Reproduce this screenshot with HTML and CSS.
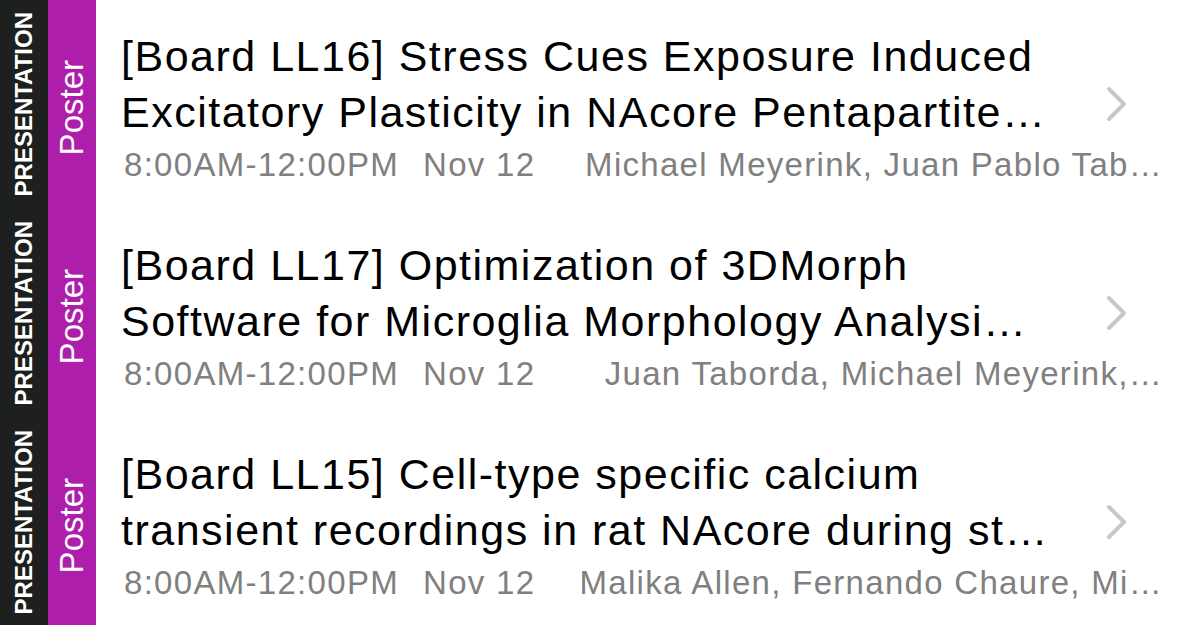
FILE: index.html
```html
<!DOCTYPE html>
<html lang="en">
<head>
  <meta charset="UTF-8" />
  <title>Sessions</title>
  <link rel="stylesheet" href="styles.css">
</head>
<body>
  <div class="list">

    <div class="session">
      <div class="kind"><span>PRESENTATION</span></div>
      <div class="type"><span>Poster</span></div>
      <div class="info">
        <div class="title">
          <span>[Board LL16] Stress Cues Exposure Induced</span>
          <span>Excitatory Plasticity in NAcore Pentapartite…</span>
        </div>
        <div class="chevron">
          <svg width="22" height="36" viewBox="0 0 22 36"><path d="M3 3 L18 18 L3 33" /></svg>
        </div>
        <div class="meta">
          <span class="time">8:00AM-12:00PM</span>
          <span class="date">Nov 12</span>
          <span class="authors">Michael Meyerink, Juan Pablo Tab…</span>
        </div>
      </div>
    </div>

    <div class="session">
      <div class="kind"><span>PRESENTATION</span></div>
      <div class="type"><span>Poster</span></div>
      <div class="info">
        <div class="title">
          <span>[Board LL17] Optimization of 3DMorph</span>
          <span>Software for Microglia Morphology Analysi…</span>
        </div>
        <div class="chevron">
          <svg width="22" height="36" viewBox="0 0 22 36"><path d="M3 3 L18 18 L3 33" /></svg>
        </div>
        <div class="meta">
          <span class="time">8:00AM-12:00PM</span>
          <span class="date">Nov 12</span>
          <span class="authors">Juan Taborda, Michael Meyerink,…</span>
        </div>
      </div>
    </div>

    <div class="session">
      <div class="kind"><span>PRESENTATION</span></div>
      <div class="type"><span>Poster</span></div>
      <div class="info">
        <div class="title">
          <span>[Board LL15] Cell-type specific calcium</span>
          <span>transient recordings in rat NAcore during st…</span>
        </div>
        <div class="chevron">
          <svg width="22" height="36" viewBox="0 0 22 36"><path d="M3 3 L18 18 L3 33" /></svg>
        </div>
        <div class="meta">
          <span class="time">8:00AM-12:00PM</span>
          <span class="date">Nov 12</span>
          <span class="authors">Malika Allen, Fernando Chaure, Mi…</span>
        </div>
      </div>
    </div>

  </div>
</body>
</html>
```

FILE: styles.css
```css
body {
  font-family: "Liberation Sans", Arial, sans-serif;
  margin: 0;
  padding: 0;
  background: #fff;
  overflow: hidden;
}

.list {
  width: 1179px;
}

.session {
  display: grid;
  grid-template-columns: 48px 48px 1fr;
  height: 209px;
}

.kind,
.type {
  display: flex;
  align-items: center;
  justify-content: center;
  color: #fff;
}

.kind span,
.type span {
  writing-mode: vertical-rl;
  transform: rotate(180deg);
  white-space: nowrap;
}

.kind {
  background: #1e2020;
  font-weight: bold;
  font-size: 24px;
}

.type {
  background: #ad1eab;
  font-size: 33px;
}

.type span {
  margin-top: 6px;
}

.info {
  display: grid;
  grid-template-columns: 1fr auto;
  grid-template-rows: auto auto;
  align-content: start;
  padding: 28px 17px 0 25px;
  min-width: 0;
}

.title {
  grid-row: 1;
  grid-column: 1;
  min-width: 0;
}

.title span {
  display: block;
  white-space: nowrap;
  font-size: 43px;
  line-height: 56px;
  letter-spacing: 1.5px;
  color: #000;
}

.chevron {
  grid-row: 1 / 3;
  grid-column: 2;
  align-self: start;
  margin: 58px 34px 0 0;
}

.chevron svg {
  display: block;
}

.chevron path {
  fill: none;
  stroke: #c7c7cc;
  stroke-width: 4;
  stroke-linecap: round;
  stroke-linejoin: round;
}

.meta {
  grid-row: 2;
  grid-column: 1 / 3;
  display: flex;
  font-size: 33px;
  letter-spacing: 1.3px;
  color: #808080;
  margin-top: 6px;
  padding-left: 3px;
  white-space: nowrap;
  min-width: 0;
}

.date {
  margin-left: 24px;
}

.authors {
  margin-left: auto;
  margin-right: -1px;
}
```
